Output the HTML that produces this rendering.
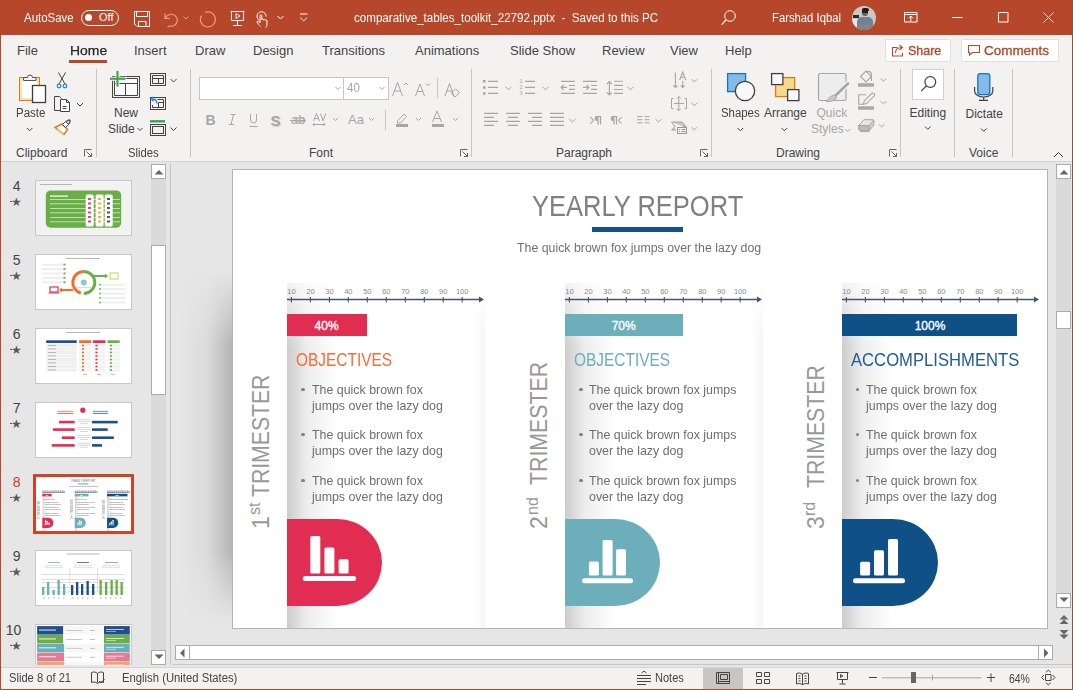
<!DOCTYPE html>
<html><head><meta charset="utf-8">
<style>
*{margin:0;padding:0;box-sizing:border-box}
html,body{width:1073px;height:690px;overflow:hidden;background:#E6E6E6;font-family:"Liberation Sans",sans-serif;position:relative}
.a{position:absolute}
.t{position:absolute;white-space:nowrap;line-height:1}
svg{position:absolute;overflow:visible}
#title{left:0;top:0;width:1073px;height:35px;background:#B7472A;color:#fff}
#rib{left:0;top:35px;width:1073px;height:127px;background:#F3F2F1;border-bottom:1px solid #D6D4D2}
.tab{font-size:13px;color:#444;top:44px}
.lbl{font-size:12px;color:#444;top:146.5px}
.blbl{font-size:12px;color:#444}
.sep{position:absolute;width:1px;background:#C8C6C4}
.ico{stroke:#444;fill:none;stroke-width:1}
.dis{color:#A6A6A6}
.sbtn{background:#fff;border:1px solid #ABABAB}
#mini svg path{stroke-width:7}
#mini .t{-webkit-text-stroke:1.2px #bbb}
#status{left:0;top:667px;width:1073px;height:23px;background:#F3F2F1;border-top:1px solid #D6D4D2}
</style></head><body>

<!-- TITLE BAR -->
<div id="title" class="a">
  <div class="t" style="left:24px;top:12px;font-size:12px;transform:scaleX(.955);transform-origin:0 0">AutoSave</div>
  <div class="a" style="left:81px;top:10px;width:38px;height:16px;border:1px solid #fff;border-radius:8px"></div>
  <div class="a" style="left:85px;top:14px;width:7px;height:7px;border-radius:50%;background:#fff"></div>
  <div class="t" style="left:99px;top:12px;font-size:11px">Off</div>
  <svg width="1073" height="35" style="left:0;top:0" fill="none" stroke="#fff" stroke-width="1">
    <!-- save -->
    <path d="M134.5 11.5h15v15h-12.5l-2.5-2.5z M136.5 11.5v5h11v-5 M138.5 26.5v-5h7.5v5"/>
    <!-- undo (disabled) -->
    <g stroke="#E39C86" stroke-width="1.2">
      <path d="M165 13.5v5h5 M165.5 18.5a6 6 0 1 1 4 7.5l-2 1"/>
      <path d="M183.5 16.5l2.5 2.5l2.5-2.5" stroke-width="1"/>
      <path d="M205 12.5a7.5 7.5 0 1 1 -3.5 3"/>
    </g>
    <!-- present -->
    <path d="M230.5 11.5h14 M231.5 11.5v9h12v-9 M237.5 20.5v5 M233 25.5h9"/>
    <path d="M236 13.5v5l4-2.5z" stroke-width=".9"/>
    <!-- touch -->
    <path d="M259 20a4.5 4.5 0 1 1 7-3.5 M260.5 26.5c-1.5-1.5-3-3-3.5-4.5c0-1 1-1.2 1.8-.5l1.2 1.2v-7c0-1.2 1.8-1.2 1.8 0v4c0-1 1.8-1 1.8 0v.5c0-1 1.8-1 1.8 0v.5c0-1 1.6-1 1.6 0v3.5c0 1.5-.5 2.5-1.5 3.5"/>
    <path d="M277.5 16l3 3l3-3"/>
    <!-- customize -->
    <path d="M300 14h7.5 M300.3 17.8l3.45 3l3.45-3"/>
    <!-- search -->
    <circle cx="730" cy="16" r="5.3"/>
    <path d="M726.2 19.8l-4.5 4.8" stroke-width="1.3"/>
    <!-- ribbon display options -->
    <path d="M904.5 12.5h12.5v9.5h-12.5z M904.5 14.5h12.5 M910.8 21.5v-5.5 M908.5 18.3l2.3-2.3l2.3 2.3"/>
    <!-- minimize -->
    <path d="M952 17.5h10.5"/>
    <path d="M998.5 12.5h9.5v9.5h-9.5z"/>
    <path d="M1043.5 12.5l10 10 M1053.5 12.5l-10 10"/>
  </svg>
  <div class="t" style="left:354px;top:12px;font-size:12px;transform:scaleX(.966);transform-origin:0 0">comparative_tables_toolkit_22792.pptx&nbsp; - &nbsp;Saved to this PC</div>
  <div class="t" style="left:772px;top:12px;font-size:12px;transform:scaleX(.94);transform-origin:0 0">Farshad Iqbal</div>
  <!-- avatar -->
  <div class="a" style="left:852px;top:6px;width:24px;height:24px;border-radius:50%;background:#C9C8C2;overflow:hidden">
    <div class="a" style="left:0;top:13px;width:7px;height:11px;background:#E4E4E4"></div>
    <div class="a" style="left:1px;top:9px;width:6px;height:3px;background:#2a2a2a"></div>
    <div class="a" style="left:10px;top:2px;width:6px;height:8px;border-radius:40%;background:#7a6055"></div>
    <div class="a" style="left:9.5px;top:1.5px;width:7px;height:3px;border-radius:3px 3px 1px 1px;background:#1e1a18"></div>
    <div class="a" style="left:10px;top:5px;width:6px;height:1.5px;background:#222"></div>
    <div class="a" style="left:5px;top:11px;width:16px;height:14px;border-radius:5px 5px 0 0;background:#6F829A"></div>
    <div class="a" style="left:7px;top:19px;width:12px;height:3px;background:#9a8070"></div>
  </div>
</div>

<!-- RIBBON -->
<div id="rib" class="a"></div>
<!--RIBBON_START-->
<!-- TABS -->
<div class="t tab" style="left:17px">File</div>
<div class="t tab" style="left:69.5px;color:#262626;font-size:13.4px;top:43.6px;-webkit-text-stroke:.25px #262626;transform:scaleX(1.04);transform-origin:0 0">Home</div>
<div class="a" style="left:69px;top:60px;width:38px;height:3px;background:#B7472A"></div>
<div class="t tab" style="left:134px">Insert</div>
<div class="t tab" style="left:195px">Draw</div>
<div class="t tab" style="left:253px">Design</div>
<div class="t tab" style="left:322px">Transitions</div>
<div class="t tab" style="left:415px">Animations</div>
<div class="t tab" style="left:510px">Slide Show</div>
<div class="t tab" style="left:602px">Review</div>
<div class="t tab" style="left:670px">View</div>
<div class="t tab" style="left:725px">Help</div>
<div class="a" style="left:885px;top:39px;width:66px;height:23px;background:#fff;border:1px solid #E1DFDD;border-radius:2px"></div>
<div class="t" style="left:907.5px;top:44px;font-size:13px;color:#B7472A;-webkit-text-stroke:.35px #B7472A;transform:scaleX(.96);transform-origin:0 0">Share</div>
<div class="a" style="left:961px;top:39px;width:98px;height:23px;background:#fff;border:1px solid #E1DFDD;border-radius:2px"></div>
<div class="t" style="left:984px;top:44px;font-size:13px;color:#B7472A;-webkit-text-stroke:.35px #B7472A;transform:scaleX(1.035);transform-origin:0 0">Comments</div>
<svg width="1073" height="70" style="left:0;top:0" fill="none" stroke="#B7472A" stroke-width="1.1"><path d="M897.5 47.5h-5v8.5h10v-3 M895.5 53c0-3.5 2.5-5.5 6.5-5.5 M899.5 45l3 2.5l-3 2.5"/><path d="M968.5 45.5h11v7h-7l-3 2.5v-2.5h-1z"/></svg>

<!-- GROUP LABELS -->
<div class="t lbl" style="left:16px">Clipboard</div>
<div class="t lbl" style="left:128px;transform:scaleX(.94);transform-origin:0 0">Slides</div>
<div class="t lbl" style="left:309px">Font</div>
<div class="t lbl" style="left:556px">Paragraph</div>
<div class="t lbl" style="left:776px">Drawing</div>
<div class="t lbl" style="left:969px">Voice</div>

<!-- BIG BUTTON LABELS -->
<div class="t blbl" style="left:15.5px;top:107px;transform:scaleX(.96);transform-origin:0 0">Paste</div>
<div class="t blbl" style="left:114px;top:107px">New</div>
<div class="t blbl" style="left:108px;top:123px">Slide</div>
<div class="t blbl" style="left:721px;top:107px;transform:scaleX(.95);transform-origin:0 0">Shapes</div>
<div class="t blbl" style="left:764px;top:107px">Arrange</div>
<div class="t blbl" style="left:816.5px;top:107px;color:#A6A6A6">Quick</div>
<div class="t blbl" style="left:811px;top:123px;color:#A6A6A6">Styles</div>
<div class="t blbl" style="left:909.5px;top:106.5px">Editing</div>
<div class="t blbl" style="left:965.5px;top:107.5px">Dictate</div>

<!-- boxes -->
<div class="a" style="left:199px;top:77px;width:145px;height:23px;background:#fff;border:1px solid #C8C6C4"></div>
<div class="a" style="left:343px;top:77px;width:46px;height:23px;background:#fff;border:1px solid #C8C6C4"></div>
<div class="a" style="left:912px;top:69px;width:32px;height:31px;background:#fff;border:1px solid #D2D0CE"></div>
<div class="t" style="left:346.5px;top:82px;font-size:12.5px;color:#A6A6A6;transform:scaleX(.92);transform-origin:0 0">40</div>

<!-- separators -->
<div class="sep" style="left:96px;top:69px;height:88px"></div>
<div class="sep" style="left:190px;top:69px;height:88px"></div>
<div class="sep" style="left:471px;top:69px;height:88px"></div>
<div class="sep" style="left:711px;top:69px;height:88px"></div>
<div class="sep" style="left:900px;top:69px;height:88px"></div>
<div class="sep" style="left:954px;top:69px;height:88px"></div>
<div class="sep" style="left:1012px;top:69px;height:88px"></div>
<div class="sep" style="left:437px;top:78px;height:20px"></div>
<div class="sep" style="left:385px;top:110px;height:20px"></div>

<svg width="1073" height="170" style="left:0;top:0" fill="none" stroke-width="1">
 <!-- chevrons dark -->
 <g stroke="#444">
  <path d="M26.8 128l2.8 2.8l2.8-2.8 M77 103l3 3l3-3 M137.5 128l2.5 2.5l2.5-2.5 M170.5 79l3 3l3-3 M170.5 127.5l3 3l3-3 M737.5 128l2.8 2.8l2.8-2.8 M781.5 128l2.8 2.8l2.8-2.8 M925 126.5l2.8 2.8l2.8-2.8 M981 128.5l2.8 2.8l2.8-2.8"/>
  <path d="M1054 157l4.5-4.5l4.5 4.5"/>
 </g>
 <!-- launchers -->
 <g stroke="#666">
  <path d="M84.5 156.5v-7h7 M86.5 151.5l5 5 M88 156.5h3.5v-3.5"/>
  <path d="M460.5 156.5v-7h7 M462.5 151.5l5 5 M464 156.5h3.5v-3.5"/>
  <path d="M700.5 156.5v-7h7 M702.5 151.5l5 5 M704 156.5h3.5v-3.5"/>
  <path d="M889.5 156.5v-7h7 M891.5 151.5l5 5 M893 156.5h3.5v-3.5"/>
 </g>
 <!-- PASTE -->
 <rect x="19.5" y="77.5" width="20" height="23" fill="#fff" stroke="#E07B13"/>
 <rect x="21" y="79" width="17" height="20" stroke="#F7D79A" stroke-width="1.5"/>
 <path d="M23.5 80.5v-3h4a2.5 2.5 0 0 1 5 0h3.5v3z" fill="#F3F3F3" stroke="#555"/>
 <rect x="32.5" y="85.5" width="13" height="17" fill="#fff" stroke="#3b3b3b" stroke-width="1.3"/>
 <!-- scissors -->
 <path d="M58.5 72.5l6.5 11.5 M65.5 72.5l-6.5 11.5" stroke="#444"/>
 <circle cx="59" cy="86" r="1.8" stroke="#2E86D6" stroke-width="1.3"/>
 <circle cx="65" cy="86" r="1.8" stroke="#2E86D6" stroke-width="1.3"/>
 <!-- copy -->
 <path d="M61.5 110.5h-7v-14h5l2 2" stroke="#444"/>
 <path d="M60.5 99.5h6l3 3v9h-9z M66.5 99.5v3h3 M62.5 106.5h4 M62.5 108.5h4" stroke="#444" fill="#fff"/>
 <!-- format painter -->
 <path d="M55 127.5l7-3.5l5.5 5.5l-3.5 5z" fill="#fff" stroke="#E07B13" stroke-width="1.5"/>
 <path d="M57 130l4 1.5l2 3" stroke="#F7C46A" stroke-width="1.5"/>
 <path d="M62.5 124.5l3-3l3 3l-3 3z" fill="#fff" stroke="#444"/>
 <path d="M66 121.5l3-1.5 q1.5 0 1 1.5l-1.5 3" stroke="#444" stroke-width="1.3"/>
 <!-- NEW SLIDE -->
 <rect x="112.5" y="76.5" width="27" height="21" stroke="#444"/>
 <path d="M114.5 95.5v-17h23v17z M125.5 83.5v12 M114.5 83.5h23" stroke="#444" fill="#FAFAFA"/>
 <path d="M109 78.7h17.5 M117.5 70v17.5" stroke="#F3F2F1" stroke-width="4"/><path d="M110 78.7h15.5 M117.5 71v15.5" stroke="#3A9D48" stroke-width="2"/>
 <!-- layout -->
 <rect x="150.5" y="73.5" width="15" height="12" stroke="#444"/>
 <path d="M152.5 75.5h11v8h-11z M152.5 78.5h11 M158.5 78.5v5" stroke="#444"/>
 <!-- reset -->
 <rect x="150.5" y="97.5" width="15" height="12" stroke="#444"/>
 <path d="M157.5 99.5h6v8h-11v-2.5 M158.5 102.5h5 M158.5 102.5v5" stroke="#444"/>
 <path d="M157 103.5c0-3-1.5-4.5-5-4.5 M153.5 96.8l-2 2.2l2 2.2" stroke="#2E86D6" stroke-width="1.3"/>
 <!-- section -->
 <path d="M150 121.3h15" stroke="#3A9D48" stroke-width="2.3"/>
 <rect x="150.5" y="124.5" width="15" height="11" stroke="#444"/>
 <rect x="152.5" y="126.5" width="11" height="7" stroke="#444"/>

 <!-- FONT GROUP (disabled) -->
 <g stroke="#A6A6A6" fill="none">
  <path d="M335.5 87l2.5 2.5l2.5-2.5 M379.5 87l2.5 2.5l2.5-2.5"/>
  <path d="M392.5 96l5-13.5l5 13.5 M394.5 91h6 M404 85l2-2l2 2"/>
  <path d="M415.5 96l4.5-12l4.5 12 M417.2 91.5h5.6 M426 83.5l2 2l2-2"/>
  <path d="M445 96l4.5-12.5l4.5 12.5 M446.5 91h6 M451.5 93l4-4l4 3l-3.5 4.5h-2z"/>
  <!-- row 2 -->
  <path d="M233.5 114.5l-2.5 10 M230.5 114.5h5 M229 124.5h5"/>
  <path d="M250.5 114v6a3 3 0 0 0 6 0v-6 M249.5 126.5h8"/>
  <path d="M295 118h7 a2 2 0 0 1 0 4h-7z" stroke-width=".9"/>
  <path d="M290 120.5h16"/>
  <path d="M313.5 121l3-7.5l3 7.5 M314.7 118.5h3.6 M320.5 113.5l2.6 7.5l2.6-7.5 M313 124.5h12 M314.5 123l-1.5 1.5l1.5 1.5 M323.5 123l1.5 1.5l-1.5 1.5"/>
  <path d="M333 118l2.5 2.5l2.5-2.5 M369 118l2.5 2.5l2.5-2.5 M416 118l2.5 2.5l2.5-2.5 M453 118l2.5 2.5l2.5-2.5"/>
  <path d="M398 120.5l6-6.5l2.5 2.5l-6 6.5h-3v-2.5" />
  <path d="M432.5 122l4.5-11l4.5 11 M434 118.5h6"/>
 </g>
 <path d="M396 125.5h12" stroke="#A6A6A6" stroke-width="3"/>
 <path d="M432 125.5h12" stroke="#A6A6A6" stroke-width="3"/>
</svg>
<div class="t" style="left:205.5px;top:113px;font-size:14px;font-weight:bold;color:#A6A6A6">B</div>
<div class="t" style="left:270.5px;top:112.5px;font-size:15px;font-weight:bold;color:#A6A6A6;text-shadow:1px 1px 1px #ccc">S</div>
<div class="t" style="left:291px;top:112.5px;font-size:13px;color:#A6A6A6">ab</div>
<div class="t" style="left:348px;top:113px;font-size:13px;color:#A6A6A6">Aa</div>
<div class="t" style="left:519.5px;top:78px;font-size:5.5px;line-height:6px;color:#A6A6A6;white-space:pre">1
2
3</div>

<svg width="1073" height="170" style="left:0;top:0" fill="none" stroke-width="1">
 <g stroke="#A6A6A6">
  <!-- bullets -->
  <path d="M483 81.3h2.5 M483 87.4h2.5 M483 93.4h2.5" stroke-width="2.5"/>
  <path d="M488 81.3h10 M488 87.4h10 M488 93.4h10" stroke-width="1.2"/>
  <path d="M505.5 86.8l3 3l3-3 M542.5 86.8l3 3l3-3 M627.5 86.8l3 3l3-3 M569.3 119l3.2 3l3.2-3 M655.5 119.2l3 2.8l3-2.8 M691.3 79.3l3 2.5l3-2.5 M691.3 103l3 2.6l3-2.6 M691.3 127.1l3 2.8l3-2.8"/>
  <path d="M525 81.3h10 M525 87.4h10 M525 93.4h10" stroke-width="1.2"/>
  <!-- indent -->
  <path d="M561 81.3h14 M569 85.5h6 M569 89.3h6 M561 93.4h14 M561.5 87.4h5.5 M563.5 85l-2.3 2.4l2.3 2.4" stroke-width="1.2"/>
  <path d="M583 81.3h14 M591 85.5h6 M591 89.3h6 M583 93.4h14 M583 87.4h5.5 M586.5 85l2.3 2.4l-2.3 2.4" stroke-width="1.2"/>
  <!-- line spacing -->
  <path d="M609.4 82v12.5 M607 84l2.4-2.5l2.4 2.5 M607 92.5l2.4 2.5l2.4-2.5 M614 81.3h9 M614 85.4h9 M614 89.5h9 M614 93.4h9" stroke-width="1.1"/>
  <!-- align -->
  <path d="M484 113.4h14 M484 117.4h10 M484 121.4h14 M484 125.4h10" stroke-width="1.2"/>
  <path d="M506 113.4h14 M508 117.4h10 M506 121.4h14 M508 125.4h10" stroke-width="1.2"/>
  <path d="M528 113.4h14 M532 117.4h10 M528 121.4h14 M532 125.4h10" stroke-width="1.2"/>
  <path d="M550 113.4h14 M550 117.4h14 M550 121.4h14 M550 125.4h14" stroke-width="1.2"/>
  <!-- ltr rtl -->
  <path d="M590.5 117l3 3.3l-3 3.3 M621.5 117l-3 3.3l3 3.3" stroke-width="1.1"/>
  <!-- columns -->
  <path d="M637 116.6h5.5 M637 119.7h5.5 M637 122.8h5.5 M644.5 116.6h5 M644.5 119.7h5 M644.5 122.8h5" stroke-width="1"/>
  <!-- text direction -->
  <path d="M675.4 72.5v15 M673.3 85.3l2.1 2.2l2.1-2.2 M679.7 80l3-8l3 8 M680.8 77.3h3.8 M682.7 81v7 M680.8 85.5l1.9 2l1.9-2" stroke-width="1.1"/>
  <!-- align text -->
  <path d="M673.5 98.5h-2v10h2 M684.5 98.5h2v10h-2 M674 103.5h10 M678.8 96.5v14 M676.8 98.5l2-2l2 2 M676.8 108.7l2 2l2-2"/>
  <!-- smartart -->
  <path d="M671.5 122h10.5l4 4.5h-3 M671.5 122l3.5 4.5l-3.5 3.5h4.5" fill="#C9C6C3" stroke="#A6A6A6"/>
  <rect x="677.5" y="127.5" width="9" height="6" fill="#F3F2F1" stroke="#999"/>
  <path d="M679 129.5h1 M681.5 129.5h4 M679 131.5h1 M681.5 131.5h4" stroke="#999"/>
 </g>
 <path d="M598 116.5v8 M600.5 116.5v8 M596 116.5h5.3" stroke="#A6A6A6" stroke-width="1.2"/>
 <path d="M597.5 116.6a1.8 1.8 0 0 0 0 3.6" fill="#A6A6A6" stroke="#A6A6A6" stroke-width="1.8"/>
 <path d="M614 116.5v8 M616.5 116.5v8 M612 116.5h5.3" stroke="#A6A6A6" stroke-width="1.2"/>
 <path d="M613.5 116.6a1.8 1.8 0 0 0 0 3.6" fill="#A6A6A6" stroke="#A6A6A6" stroke-width="1.8"/>
 <!-- DRAWING -->
 <rect x="727.6" y="73.6" width="18" height="18" fill="#82BBEA" stroke="#1671C7" stroke-width="1.3"/>
 <circle cx="745" cy="91" r="9.7" fill="#F8F8F8" stroke="#404040" stroke-width="1.3"/>
 <rect x="775.6" y="77.6" width="19" height="19" fill="#F7D98B" stroke="#E07B13" stroke-width="1.3"/>
 <rect x="771.6" y="73.6" width="11.3" height="11" fill="#F8F8F8" stroke="#404040" stroke-width="1.3"/>
 <rect x="787.6" y="89.6" width="11.3" height="11" fill="#F8F8F8" stroke="#404040" stroke-width="1.3"/>
 <rect x="818.5" y="73.5" width="27.5" height="27" rx="1.5" fill="#EDEDED" stroke="#A6A6A6" stroke-width="1.2"/>
 <path d="M848.5 83l-14 13.5" stroke="#F3F2F1" stroke-width="5.5"/>
 <path d="M848 83.5l-13 12.5" stroke="#A6A6A6" stroke-width="2.6" stroke-linecap="round"/>
 <path d="M835.8 95.2c-3.5-.5-6.5 1.5-9.5 6.3c4 .5 7.5-.5 10.5-3.6z" fill="#C8C8C8" stroke="#A6A6A6" stroke-width=".9"/>
 <path d="M845 129l2.6 2.6l2.6-2.6" stroke="#A6A6A6"/>
 <g stroke="#A6A6A6">
  <path d="M880.6 78.5l2.9 2.6l2.9-2.6 M880.6 101.3l2.9 2.6l2.9-2.6 M878.7 124.2l2.9 2.6l2.9-2.6"/>
  <path d="M860.5 76.5l5.5-5.5l5.5 5.5l-5.5 5.5z M867 72c2-1.5 4.5 0 4.5 2.5v6.5" stroke-width="1.1"/>
  <path d="M866 94.8h-7.3v9.5h4.5" stroke-width="1.1"/>
  <path d="M863.5 104.3l.6-3.2l7.5-7.5a1.6 1.6 0 0 1 2.5 2.5l-7.5 7.5z" stroke-width="1.1"/>
 </g>
 <path d="M858 85h16 M858 108h16" stroke="#ADA9A6" stroke-width="3.6"/>
 <path d="M858.8 125.5l5-5.8h9.5l.6 2.2l-5 6.2v3.5h-8.3l-1.8-2z" fill="#E6E6E6" stroke="#A6A6A6" stroke-width="1"/>
 <path d="M858.8 125.5h10.2v5.6h-8.3l-1.9-2z" fill="#BDBAB7" stroke="#A6A6A6" stroke-width="1"/>
 <path d="M869 125.5l4.8-5.5v5l-4.8 6z" fill="#D0CDCA" stroke="#A6A6A6" stroke-width="1"/>
 <!-- editing -->
 <circle cx="930.3" cy="82" r="5.4" stroke="#404040" stroke-width="1.2"/>
 <path d="M926.4 85.9l-5.2 5.2" stroke="#404040" stroke-width="1.3"/>
 <!-- mic -->
 <rect x="977.8" y="73.6" width="12" height="21" rx="2.5" fill="#82BBEA" stroke="#1671C7" stroke-width="1.3"/>
 <path d="M974.6 87v4a9.1 6 0 0 0 18.2 0v-4 M983.7 97v3.3 M979 100.3h9" stroke="#404040" stroke-width="1.2"/>
</svg>

<!--RIBBON_END-->

<!--BODY_START-->
<!--THUMBS_START-->
<div class="t" style="left:12.8px;top:178.5px;font-size:14px;color:#444">4</div>
<div class="t" style="left:10.5px;top:196px;font-size:12px;color:#595959">&#9733;</div>
<div class="a" style="left:10px;top:201px;width:2px;height:1px;background:#595959"></div>
<div class="t" style="left:12.8px;top:252.5px;font-size:14px;color:#444">5</div>
<div class="t" style="left:10.5px;top:270px;font-size:12px;color:#595959">&#9733;</div>
<div class="a" style="left:10px;top:275px;width:2px;height:1px;background:#595959"></div>
<div class="t" style="left:12.8px;top:326.5px;font-size:14px;color:#444">6</div>
<div class="t" style="left:10.5px;top:344px;font-size:12px;color:#595959">&#9733;</div>
<div class="a" style="left:10px;top:349px;width:2px;height:1px;background:#595959"></div>
<div class="t" style="left:12.8px;top:400.5px;font-size:14px;color:#444">7</div>
<div class="t" style="left:10.5px;top:418px;font-size:12px;color:#595959">&#9733;</div>
<div class="a" style="left:10px;top:423px;width:2px;height:1px;background:#595959"></div>
<div class="t" style="left:12.8px;top:474.5px;font-size:14px;color:#C43E1C">8</div>
<div class="t" style="left:10.5px;top:492px;font-size:12px;color:#595959">&#9733;</div>
<div class="a" style="left:10px;top:497px;width:2px;height:1px;background:#595959"></div>
<div class="t" style="left:12.8px;top:548.5px;font-size:14px;color:#444">9</div>
<div class="t" style="left:10.5px;top:566px;font-size:12px;color:#595959">&#9733;</div>
<div class="a" style="left:10px;top:571px;width:2px;height:1px;background:#595959"></div>
<div class="t" style="left:5.8px;top:622.5px;font-size:14px;color:#444">10</div>
<div class="t" style="left:10.5px;top:640px;font-size:12px;color:#595959">&#9733;</div>
<div class="a" style="left:10px;top:645px;width:2px;height:1px;background:#595959"></div>
<div class="a" style="left:0;top:163px;width:170px;height:502px;overflow:hidden">
<div class="a" style="left:0;top:-163px;width:170px;height:690px">
<div class="a" style="left:35px;top:180px;width:97px;height:56px;border:1px solid #C8C8C8;background:#F2F2F2"></div>
<div class="a" style="left:35px;top:254px;width:97px;height:56px;border:1px solid #C8C8C8;background:#fff"></div>
<div class="a" style="left:35px;top:328px;width:97px;height:56px;border:1px solid #C8C8C8;background:#fff"></div>
<div class="a" style="left:35px;top:402px;width:97px;height:56px;border:1px solid #C8C8C8;background:#fff"></div>
<div class="a" style="left:33px;top:474px;width:101px;height:60px;border:3px solid #D04423;background:#fff"></div>
<div class="a" style="left:35px;top:550px;width:97px;height:56px;border:1px solid #C8C8C8;background:#fff"></div>
<div class="a" style="left:35px;top:624px;width:97px;height:56px;border:1px solid #C8C8C8;background:#fff"></div>
<svg width="170" height="690" style="left:0;top:0"><rect x="40" y="184" width="32" height="1" fill="#b5b5b5"/><rect x="45.8" y="190.4" width="75.4" height="37.4" rx="5" fill="#6AAF45"/><rect x="50" y="199" width="70" height="0.7" fill="#E9F3E2"/><rect x="50" y="203.5" width="70" height="0.7" fill="#E9F3E2"/><rect x="50" y="208" width="70" height="0.7" fill="#E9F3E2"/><rect x="50" y="212.5" width="70" height="0.7" fill="#E9F3E2"/><rect x="50" y="217" width="70" height="0.7" fill="#E9F3E2"/><rect x="50" y="221.5" width="70" height="0.7" fill="#E9F3E2"/><rect x="50" y="195.5" width="18" height="1.2" fill="#fff"/><rect x="85.7" y="194.6" width="8" height="32" rx="1.5" fill="#fff"/><rect x="95.6" y="194.6" width="8" height="32" rx="1.5" fill="#fff"/><rect x="104.7" y="194.6" width="8" height="32" rx="1.5" fill="#fff"/><rect x="88" y="198" width="3" height="2" fill="#E04A6A"/><rect x="98" y="198" width="3" height="2" fill="#F0B030"/><rect x="107" y="198" width="3" height="2" fill="#555"/><rect x="88" y="202.5" width="3" height="2" fill="#E04A6A"/><rect x="98" y="202.5" width="3" height="2" fill="#F0B030"/><rect x="107" y="202.5" width="3" height="2" fill="#555"/><rect x="88" y="207" width="3" height="2" fill="#E04A6A"/><rect x="98" y="207" width="3" height="2" fill="#F0B030"/><rect x="107" y="207" width="3" height="2" fill="#555"/><rect x="88" y="211.5" width="3" height="2" fill="#E04A6A"/><rect x="98" y="211.5" width="3" height="2" fill="#F0B030"/><rect x="107" y="211.5" width="3" height="2" fill="#555"/><rect x="88" y="216" width="3" height="2" fill="#E04A6A"/><rect x="98" y="216" width="3" height="2" fill="#F0B030"/><rect x="107" y="216" width="3" height="2" fill="#555"/><rect x="88" y="220.5" width="3" height="2" fill="#E04A6A"/><rect x="98" y="220.5" width="3" height="2" fill="#F0B030"/><rect x="107" y="220.5" width="3" height="2" fill="#555"/><rect x="66" y="258" width="34" height="1" fill="#b5b5b5"/><rect x="41.8" y="263.8" width="22" height="1.8" fill="#EDEDED"/><rect x="63.5" y="263.6" width="2" height="2" fill="#7CB14A"/><rect x="41.8" y="268.2" width="22" height="1.8" fill="#EDEDED"/><rect x="63.5" y="268" width="2" height="2" fill="#7CB14A"/><rect x="41.8" y="272.59999999999997" width="22" height="1.8" fill="#EDEDED"/><rect x="63.5" y="272.4" width="2" height="2" fill="#7CB14A"/><rect x="41.8" y="277.0" width="22" height="1.8" fill="#EDEDED"/><rect x="63.5" y="276.8" width="2" height="2" fill="#7CB14A"/><rect x="41.8" y="281.4" width="22" height="1.8" fill="#EDEDED"/><rect x="63.5" y="281.2" width="2" height="2" fill="#7CB14A"/><rect x="101" y="283.9" width="24" height="1.8" fill="#EDEDED"/><circle cx="100" cy="284.7" r="1" fill="#7CB14A"/><rect x="101" y="288.2" width="24" height="1.8" fill="#EDEDED"/><circle cx="100" cy="289" r="1" fill="#7CB14A"/><rect x="101" y="292.7" width="24" height="1.8" fill="#EDEDED"/><circle cx="100" cy="293.5" r="1" fill="#7CB14A"/><rect x="101" y="297.2" width="24" height="1.8" fill="#EDEDED"/><circle cx="100" cy="298" r="1" fill="#7CB14A"/><rect x="101" y="301.59999999999997" width="24" height="1.8" fill="#EDEDED"/><circle cx="100" cy="302.4" r="1" fill="#7CB14A"/><path d="M83.8 271.5a11 11 0 0 0 -3 21.6" stroke="#F26C22" stroke-width="3" fill="none"/><path d="M83.8 271.5a11 11 0 0 1 0 22" stroke="#6AAF45" stroke-width="3" fill="none"/><path d="M93 276h12" stroke="#6AAF45" stroke-width="2"/><path d="M105 273.5l3 2.5l-3 2.5z" fill="#6AAF45"/><rect x="110" y="273" width="8" height="6" fill="none" stroke="#C5DE6A" stroke-width="1.2"/><path d="M73 290h-11" stroke="#F26C22" stroke-width="2"/><path d="M62 287.5l-3 2.5l3 2.5z" fill="#F26C22"/><rect x="50" y="287" width="8" height="5" fill="none" stroke="#E02F52" stroke-width="1.2"/><path d="M48.5 293h11" stroke="#E02F52"/><circle cx="83.8" cy="282.5" r="3" fill="#8ACCC8"/><rect x="77" y="287" width="14" height="0.7" fill="#cfcfcf"/><rect x="66" y="332" width="34" height="1" fill="#b5b5b5"/><rect x="46.2" y="340.3" width="30.5" height="2.7" fill="#1F4E8C"/><rect x="79.1" y="340.3" width="12.2" height="2.7" fill="#F26C22"/><rect x="92.9" y="340.3" width="12.6" height="2.7" fill="#E02F52"/><rect x="107.5" y="340.3" width="12.2" height="2.7" fill="#6AAF45"/><rect x="46.2" y="344.0" width="30.5" height="3" fill="#EFEFEF"/><rect x="79.1" y="344.0" width="12.2" height="3" fill="#F3F3F3"/><rect x="92.9" y="344.0" width="12.6" height="3" fill="#F3F3F3"/><rect x="107.5" y="344.0" width="12.2" height="3" fill="#F3F3F3"/><rect x="48" y="345.0" width="8" height="0.8" fill="#aaa"/><rect x="82" y="344.7" width="2" height="1.6" fill="#F26C22"/><rect x="95.5" y="344.7" width="2" height="1.6" fill="#E02F52"/><rect x="110" y="344.7" width="2" height="1.6" fill="#6AAF45"/><rect x="46.2" y="347.5" width="30.5" height="3" fill="#EFEFEF"/><rect x="79.1" y="347.5" width="12.2" height="3" fill="#F3F3F3"/><rect x="92.9" y="347.5" width="12.6" height="3" fill="#F3F3F3"/><rect x="107.5" y="347.5" width="12.2" height="3" fill="#F3F3F3"/><rect x="48" y="348.5" width="8" height="0.8" fill="#aaa"/><rect x="82" y="348.2" width="2" height="1.6" fill="#F26C22"/><rect x="95.5" y="348.2" width="2" height="1.6" fill="#E02F52"/><rect x="110" y="348.2" width="2" height="1.6" fill="#6AAF45"/><rect x="46.2" y="351.0" width="30.5" height="3" fill="#EFEFEF"/><rect x="79.1" y="351.0" width="12.2" height="3" fill="#F3F3F3"/><rect x="92.9" y="351.0" width="12.6" height="3" fill="#F3F3F3"/><rect x="107.5" y="351.0" width="12.2" height="3" fill="#F3F3F3"/><rect x="48" y="352.0" width="8" height="0.8" fill="#aaa"/><rect x="82" y="351.7" width="2" height="1.6" fill="#F26C22"/><rect x="95.5" y="351.7" width="2" height="1.6" fill="#E02F52"/><rect x="110" y="351.7" width="2" height="1.6" fill="#6AAF45"/><rect x="46.2" y="354.5" width="30.5" height="3" fill="#EFEFEF"/><rect x="79.1" y="354.5" width="12.2" height="3" fill="#F3F3F3"/><rect x="92.9" y="354.5" width="12.6" height="3" fill="#F3F3F3"/><rect x="107.5" y="354.5" width="12.2" height="3" fill="#F3F3F3"/><rect x="48" y="355.5" width="8" height="0.8" fill="#aaa"/><rect x="82" y="355.2" width="2" height="1.6" fill="#F26C22"/><rect x="95.5" y="355.2" width="2" height="1.6" fill="#E02F52"/><rect x="110" y="355.2" width="2" height="1.6" fill="#6AAF45"/><rect x="46.2" y="358.0" width="30.5" height="3" fill="#EFEFEF"/><rect x="79.1" y="358.0" width="12.2" height="3" fill="#F3F3F3"/><rect x="92.9" y="358.0" width="12.6" height="3" fill="#F3F3F3"/><rect x="107.5" y="358.0" width="12.2" height="3" fill="#F3F3F3"/><rect x="48" y="359.0" width="8" height="0.8" fill="#aaa"/><rect x="82" y="358.7" width="2" height="1.6" fill="#F26C22"/><rect x="95.5" y="358.7" width="2" height="1.6" fill="#E02F52"/><rect x="110" y="358.7" width="2" height="1.6" fill="#6AAF45"/><rect x="46.2" y="361.5" width="30.5" height="3" fill="#EFEFEF"/><rect x="79.1" y="361.5" width="12.2" height="3" fill="#F3F3F3"/><rect x="92.9" y="361.5" width="12.6" height="3" fill="#F3F3F3"/><rect x="107.5" y="361.5" width="12.2" height="3" fill="#F3F3F3"/><rect x="48" y="362.5" width="8" height="0.8" fill="#aaa"/><rect x="82" y="362.2" width="2" height="1.6" fill="#F26C22"/><rect x="95.5" y="362.2" width="2" height="1.6" fill="#E02F52"/><rect x="110" y="362.2" width="2" height="1.6" fill="#6AAF45"/><rect x="46.2" y="365.0" width="30.5" height="3" fill="#EFEFEF"/><rect x="79.1" y="365.0" width="12.2" height="3" fill="#F3F3F3"/><rect x="92.9" y="365.0" width="12.6" height="3" fill="#F3F3F3"/><rect x="107.5" y="365.0" width="12.2" height="3" fill="#F3F3F3"/><rect x="48" y="366.0" width="8" height="0.8" fill="#aaa"/><rect x="82" y="365.7" width="2" height="1.6" fill="#F26C22"/><rect x="95.5" y="365.7" width="2" height="1.6" fill="#E02F52"/><rect x="110" y="365.7" width="2" height="1.6" fill="#6AAF45"/><rect x="46.2" y="368.5" width="30.5" height="3" fill="#EFEFEF"/><rect x="79.1" y="368.5" width="12.2" height="3" fill="#F3F3F3"/><rect x="92.9" y="368.5" width="12.6" height="3" fill="#F3F3F3"/><rect x="107.5" y="368.5" width="12.2" height="3" fill="#F3F3F3"/><rect x="48" y="369.5" width="8" height="0.8" fill="#aaa"/><rect x="82" y="369.2" width="2" height="1.6" fill="#F26C22"/><rect x="95.5" y="369.2" width="2" height="1.6" fill="#E02F52"/><rect x="110" y="369.2" width="2" height="1.6" fill="#6AAF45"/><rect x="83" y="374" width="4" height="0.8" fill="#F5A070"/><rect x="97" y="374" width="4" height="0.8" fill="#EE8899"/><rect x="111" y="374" width="4" height="0.8" fill="#A6D08A"/><rect x="57.4" y="410.8" width="16" height="1.3" fill="#F4A070"/><rect x="57.4" y="413.3" width="16" height="0.7" fill="#E02F52"/><circle cx="82.8" cy="410.2" r="2.6" fill="#E02F52"/><rect x="92.9" y="410.8" width="15" height="1.3" fill="#8E9BC8"/><rect x="92.9" y="413.3" width="15" height="0.7" fill="#1F4E8C"/><rect x="59" y="420.8" width="15.700000000000003" height="2.6" fill="#E02F52"/><rect x="91.9" y="420.8" width="25.799999999999997" height="2.6" fill="#1F4E8C"/><rect x="77.5" y="419.5" width="13" height="0.6" fill="#bbb"/><rect x="77.5" y="421.5" width="13" height="0.6" fill="#bbb"/><rect x="80" y="423.5" width="8" height="0.6" fill="#bbb"/><rect x="53" y="428.3" width="21.700000000000003" height="2.6" fill="#E02F52"/><rect x="91.9" y="428.3" width="15.799999999999997" height="2.6" fill="#1F4E8C"/><rect x="77.5" y="427.0" width="13" height="0.6" fill="#bbb"/><rect x="77.5" y="429.0" width="13" height="0.6" fill="#bbb"/><rect x="80" y="431.0" width="8" height="0.6" fill="#bbb"/><rect x="61.9" y="436.40000000000003" width="12.800000000000004" height="2.6" fill="#E02F52"/><rect x="91.9" y="436.40000000000003" width="21.89999999999999" height="2.6" fill="#1F4E8C"/><rect x="77.5" y="435.1" width="13" height="0.6" fill="#bbb"/><rect x="77.5" y="437.1" width="13" height="0.6" fill="#bbb"/><rect x="80" y="439.1" width="8" height="0.6" fill="#bbb"/><rect x="51.7" y="444.1" width="23.0" height="2.6" fill="#E02F52"/><rect x="91.9" y="444.1" width="10.099999999999994" height="2.6" fill="#1F4E8C"/><rect x="77.5" y="442.8" width="13" height="0.6" fill="#bbb"/><rect x="77.5" y="444.8" width="13" height="0.6" fill="#bbb"/><rect x="80" y="446.8" width="8" height="0.6" fill="#bbb"/><rect x="66.5" y="553.5" width="33" height="1" fill="#b5b5b5"/><rect x="48" y="562" width="12" height="1" fill="#8CC3CC"/><rect x="77" y="562" width="12" height="1" fill="#4F7BB0"/><rect x="105" y="562" width="13" height="1" fill="#8EC46A"/><rect x="45" y="565.5" width="18" height="0.6" fill="#c8c8c8"/><rect x="45" y="567.5" width="18" height="0.6" fill="#c8c8c8"/><rect x="74" y="565.5" width="18" height="0.6" fill="#c8c8c8"/><rect x="74" y="567.5" width="18" height="0.6" fill="#c8c8c8"/><rect x="102" y="565.5" width="18" height="0.6" fill="#c8c8c8"/><rect x="102" y="567.5" width="18" height="0.6" fill="#c8c8c8"/><rect x="41.6" y="574" width="83.2" height="0.6" fill="#C8C8C8"/><rect x="41.6" y="579.2" width="83.2" height="0.6" fill="#C8C8C8"/><rect x="41.6" y="582.4" width="83.2" height="0.6" fill="#C8C8C8"/><rect x="41.6" y="587.3" width="83.2" height="0.6" fill="#C8C8C8"/><rect x="41.6" y="591.7" width="83.2" height="0.6" fill="#C8C8C8"/><rect x="69.6" y="568" width="0.6" height="24" fill="#ccc"/><rect x="97.4" y="568" width="0.6" height="24" fill="#ccc"/><rect x="42" y="587" width="2.3" height="8" fill="#6AAEBB"/><rect x="47" y="582" width="2.3" height="13" fill="#6AAEBB"/><rect x="52.5" y="590" width="2.3" height="5" fill="#6AAEBB"/><rect x="57.5" y="580" width="2.3" height="15" fill="#6AAEBB"/><rect x="63" y="584" width="2.3" height="11" fill="#6AAEBB"/><rect x="71" y="585" width="2.3" height="10" fill="#1F4E8C"/><rect x="76" y="582" width="2.3" height="13" fill="#1F4E8C"/><rect x="81" y="584" width="2.3" height="11" fill="#1F4E8C"/><rect x="86.5" y="581" width="2.3" height="14" fill="#1F4E8C"/><rect x="92" y="584" width="2.3" height="11" fill="#1F4E8C"/><rect x="99.5" y="580" width="2.3" height="15" fill="#6AAF45"/><rect x="105" y="582" width="2.3" height="13" fill="#6AAF45"/><rect x="110.5" y="580" width="2.3" height="15" fill="#6AAF45"/><rect x="115.5" y="580" width="2.3" height="15" fill="#6AAF45"/><rect x="120.5" y="582" width="2.3" height="13" fill="#6AAF45"/><rect x="43" y="597.5" width="1.5" height="1" fill="#aaa"/><rect x="48" y="597.5" width="1.5" height="1" fill="#aaa"/><rect x="53" y="597.5" width="1.5" height="1" fill="#aaa"/><rect x="58" y="597.5" width="1.5" height="1" fill="#aaa"/><rect x="63" y="597.5" width="1.5" height="1" fill="#aaa"/><rect x="72" y="597.5" width="1.5" height="1" fill="#aaa"/><rect x="77" y="597.5" width="1.5" height="1" fill="#aaa"/><rect x="82" y="597.5" width="1.5" height="1" fill="#aaa"/><rect x="87" y="597.5" width="1.5" height="1" fill="#aaa"/><rect x="92" y="597.5" width="1.5" height="1" fill="#aaa"/><rect x="100" y="597.5" width="1.5" height="1" fill="#aaa"/><rect x="105" y="597.5" width="1.5" height="1" fill="#aaa"/><rect x="110" y="597.5" width="1.5" height="1" fill="#aaa"/><rect x="115" y="597.5" width="1.5" height="1" fill="#aaa"/><rect x="120" y="597.5" width="1.5" height="1" fill="#aaa"/><rect x="37" y="626.1" width="93" height="8.5" fill="#F7F7F7"/><rect x="37.1" y="626.1" width="26" height="8.5" fill="#1F4E8C"/><rect x="104" y="626.1" width="25.8" height="8.5" fill="#1F4E8C"/><rect x="39" y="629.6" width="17" height="0.9" fill="#fff"/><rect x="106" y="629.1" width="18" height="0.7" fill="#fff"/><rect x="106" y="631.1" width="10" height="0.5" fill="#fff"/><rect x="66" y="630.1" width="16" height="0.8" fill="#bbb"/><rect x="90" y="630.1" width="5" height="0.9" fill="#bbb"/><rect x="37" y="635.0" width="93" height="8.5" fill="#fff"/><rect x="37.1" y="635.0" width="26" height="8.5" fill="#6AAF45"/><rect x="104" y="635.0" width="25.8" height="8.5" fill="#6AAF45"/><rect x="39" y="638.5" width="17" height="0.9" fill="#fff"/><rect x="106" y="638.0" width="18" height="0.7" fill="#fff"/><rect x="106" y="640.0" width="10" height="0.5" fill="#fff"/><rect x="66" y="639.0" width="16" height="0.8" fill="#bbb"/><rect x="90" y="639.0" width="5" height="0.9" fill="#bbb"/><rect x="37" y="643.9" width="93" height="8.5" fill="#F7F7F7"/><rect x="37.1" y="643.9" width="27" height="8.5" fill="#6AAEBB"/><rect x="104" y="643.9" width="25.8" height="8.5" fill="#6AAEBB"/><rect x="39" y="647.4" width="17" height="0.9" fill="#fff"/><rect x="106" y="646.9" width="18" height="0.7" fill="#fff"/><rect x="106" y="648.9" width="10" height="0.5" fill="#fff"/><rect x="66" y="647.9" width="16" height="0.8" fill="#bbb"/><rect x="90" y="647.9" width="5" height="0.9" fill="#bbb"/><rect x="37" y="652.8000000000001" width="93" height="8.5" fill="#fff"/><rect x="37.1" y="652.8000000000001" width="27" height="8.5" fill="#E57B93"/><rect x="104" y="652.8000000000001" width="25.8" height="8.5" fill="#E57B93"/><rect x="39" y="656.3000000000001" width="17" height="0.9" fill="#fff"/><rect x="106" y="655.8000000000001" width="18" height="0.7" fill="#fff"/><rect x="106" y="657.8000000000001" width="10" height="0.5" fill="#fff"/><rect x="66" y="656.8000000000001" width="16" height="0.8" fill="#bbb"/><rect x="90" y="656.8000000000001" width="5" height="0.9" fill="#bbb"/><rect x="37" y="661.7" width="93" height="8.5" fill="#F7F7F7"/><rect x="37.1" y="661.7" width="27" height="8.5" fill="#F5A070"/><rect x="104" y="661.7" width="25.8" height="8.5" fill="#F5A070"/><rect x="39" y="665.2" width="17" height="0.9" fill="#fff"/><rect x="106" y="664.7" width="18" height="0.7" fill="#fff"/><rect x="106" y="666.7" width="10" height="0.5" fill="#fff"/><rect x="66" y="665.7" width="16" height="0.8" fill="#bbb"/><rect x="90" y="665.7" width="5" height="0.9" fill="#bbb"/></svg>
<div class="a" style="left:36px;top:477px;width:95px;height:54px;overflow:hidden">
<div class="a" style="left:0;top:0;width:814px;height:458px;transform:scale(.1167);transform-origin:0 0"><div class="a" id="mini" style="left:-233px;top:-170px;width:1073px;height:690px"><div class="t" style="left:532px;top:191.3px;font-size:29.6px;color:#808080;transform:scaleX(.862);transform-origin:0 0">YEARLY REPORT</div>
<div class="a" style="left:592px;top:227px;width:91px;height:5px;background:#17508A"></div>
<div class="t" style="left:516.5px;top:241.5px;font-size:12.5px;color:#707070;transform:scaleX(.987);transform-origin:0 0">The quick brown fox jumps over the lazy dog</div>
<div class="a" style="left:287px;top:283px;width:198px;height:360px;background:#fff;box-shadow:1px 2px 5px rgba(0,0,0,.07);-webkit-mask-image:linear-gradient(180deg,rgba(0,0,0,.0) 0,#000 6px)"></div>
<div class="a" style="left:287px;top:283px;width:198px;height:360px;background:#fff"></div>
<div class="a" style="left:473px;top:283px;width:12px;height:345px;background:linear-gradient(90deg,rgba(0,0,0,0),rgba(0,0,0,.035));-webkit-mask-image:linear-gradient(180deg,transparent 0,#000 15%)"></div>
<div class="a" style="left:287px;top:283px;width:50px;height:360px;background:linear-gradient(90deg,rgba(0,0,0,.2),rgba(0,0,0,.07) 40%,rgba(0,0,0,0));-webkit-mask-image:linear-gradient(180deg,rgba(0,0,0,.25) 0,#000 18%,#000 100%)"></div>
<svg width="1073" height="690" style="left:0;top:0" fill="none"><path d="M287 299.5H481" stroke="#44546A" stroke-width="1.3"/><path d="M479 296.5l5 3l-5 3z" fill="#44546A"/><path d="M291.4 297v5.5 M310.4 297v5.5 M329.4 297v5.5 M348.3 297v5.5 M367.3 297v5.5 M386.3 297v5.5 M405.3 297v5.5 M424.3 297v5.5 M443.2 297v5.5 M462.2 297v5.5" stroke="#44546A" stroke-width="1.1"/></svg>
<div class="t" style="left:276.4px;width:30px;text-align:center;top:287.5px;font-size:7.5px;color:#8A8A8A">10</div>
<div class="t" style="left:295.4px;width:30px;text-align:center;top:287.5px;font-size:7.5px;color:#8A8A8A">20</div>
<div class="t" style="left:314.4px;width:30px;text-align:center;top:287.5px;font-size:7.5px;color:#8A8A8A">30</div>
<div class="t" style="left:333.3px;width:30px;text-align:center;top:287.5px;font-size:7.5px;color:#8A8A8A">40</div>
<div class="t" style="left:352.3px;width:30px;text-align:center;top:287.5px;font-size:7.5px;color:#8A8A8A">50</div>
<div class="t" style="left:371.3px;width:30px;text-align:center;top:287.5px;font-size:7.5px;color:#8A8A8A">60</div>
<div class="t" style="left:390.3px;width:30px;text-align:center;top:287.5px;font-size:7.5px;color:#8A8A8A">70</div>
<div class="t" style="left:409.3px;width:30px;text-align:center;top:287.5px;font-size:7.5px;color:#8A8A8A">80</div>
<div class="t" style="left:428.2px;width:30px;text-align:center;top:287.5px;font-size:7.5px;color:#8A8A8A">90</div>
<div class="t" style="left:447.2px;width:30px;text-align:center;top:287.5px;font-size:7.5px;color:#8A8A8A">100</div>
<div class="a" style="left:287px;top:314px;width:80px;height:22px;background:#E12D51"></div>
<div class="t" style="left:296.6px;width:60px;text-align:center;top:319.6px;font-size:12px;color:#fff;-webkit-text-stroke:.35px #fff">40%</div>
<div class="t" style="left:295.6px;top:350.9px;font-size:18.8px;color:#F26E38;transform:scaleX(0.822);transform-origin:0 0">OBJECTIVES</div>
<div class="a" style="left:301.2px;top:387.7px;width:3.5px;height:3.5px;border-radius:50%;background:#808080"></div>
<div class="t" style="left:311.5px;top:381.5px;font-size:12.8px;line-height:16.1px;color:#6E6E6E;transform:scaleX(.968);transform-origin:0 0">The quick brown fox<br>jumps over the lazy dog</div>
<div class="a" style="left:301.2px;top:432.7px;width:3.5px;height:3.5px;border-radius:50%;background:#808080"></div>
<div class="t" style="left:311.5px;top:426.5px;font-size:12.8px;line-height:16.1px;color:#6E6E6E;transform:scaleX(.968);transform-origin:0 0">The quick brown fox<br>jumps over the lazy dog</div>
<div class="a" style="left:301.2px;top:478.7px;width:3.5px;height:3.5px;border-radius:50%;background:#808080"></div>
<div class="t" style="left:311.5px;top:472.5px;font-size:12.8px;line-height:16.1px;color:#6E6E6E;transform:scaleX(.968);transform-origin:0 0">The quick brown fox<br>jumps over the lazy dog</div>
<div class="a" style="left:287px;top:519px;width:95px;height:87px;background:#E12D51;border-radius:0 45px 45px 0/0 43.5px 43.5px 0"></div>
<svg width="1073" height="690" style="left:0;top:0"><rect x="310.3" y="536" width="10" height="37.5" rx="1.5" fill="#fff"/><rect x="324.4" y="547.6" width="10" height="25.899999999999977" rx="1.5" fill="#fff"/><rect x="338.6" y="559.2" width="10" height="14.299999999999955" rx="1.5" fill="#fff"/><rect x="302.8" y="576.1" width="53.39999999999998" height="5" rx="2.5" fill="#fff"/></svg>
<div class="t" style="left:249.5px;top:496.9px;font-size:23px;color:#989898;transform:rotate(-90deg) scaleX(0.921);transform-origin:0 0">TRIMESTER</div>
<div class="t" style="left:249.5px;top:528.5px;font-size:23px;color:#989898;transform:rotate(-90deg);transform-origin:0 0">1</div>
<div class="t" style="left:247.3px;top:515px;font-size:16px;color:#989898;transform:rotate(-90deg);transform-origin:0 0">st</div>
<div class="a" style="left:565px;top:283px;width:198px;height:360px;background:#fff;box-shadow:1px 2px 5px rgba(0,0,0,.07);-webkit-mask-image:linear-gradient(180deg,rgba(0,0,0,.0) 0,#000 6px)"></div>
<div class="a" style="left:565px;top:283px;width:198px;height:360px;background:#fff"></div>
<div class="a" style="left:751px;top:283px;width:12px;height:345px;background:linear-gradient(90deg,rgba(0,0,0,0),rgba(0,0,0,.035));-webkit-mask-image:linear-gradient(180deg,transparent 0,#000 15%)"></div>
<div class="a" style="left:565px;top:283px;width:50px;height:360px;background:linear-gradient(90deg,rgba(0,0,0,.2),rgba(0,0,0,.07) 40%,rgba(0,0,0,0));-webkit-mask-image:linear-gradient(180deg,rgba(0,0,0,.25) 0,#000 18%,#000 100%)"></div>
<svg width="1073" height="690" style="left:0;top:0" fill="none"><path d="M565 299.5H759" stroke="#44546A" stroke-width="1.3"/><path d="M757 296.5l5 3l-5 3z" fill="#44546A"/><path d="M569.4 297v5.5 M588.4 297v5.5 M607.4 297v5.5 M626.3 297v5.5 M645.3 297v5.5 M664.3 297v5.5 M683.3 297v5.5 M702.3 297v5.5 M721.2 297v5.5 M740.2 297v5.5" stroke="#44546A" stroke-width="1.1"/></svg>
<div class="t" style="left:554.4px;width:30px;text-align:center;top:287.5px;font-size:7.5px;color:#8A8A8A">10</div>
<div class="t" style="left:573.4px;width:30px;text-align:center;top:287.5px;font-size:7.5px;color:#8A8A8A">20</div>
<div class="t" style="left:592.4px;width:30px;text-align:center;top:287.5px;font-size:7.5px;color:#8A8A8A">30</div>
<div class="t" style="left:611.3px;width:30px;text-align:center;top:287.5px;font-size:7.5px;color:#8A8A8A">40</div>
<div class="t" style="left:630.3px;width:30px;text-align:center;top:287.5px;font-size:7.5px;color:#8A8A8A">50</div>
<div class="t" style="left:649.3px;width:30px;text-align:center;top:287.5px;font-size:7.5px;color:#8A8A8A">60</div>
<div class="t" style="left:668.3px;width:30px;text-align:center;top:287.5px;font-size:7.5px;color:#8A8A8A">70</div>
<div class="t" style="left:687.3px;width:30px;text-align:center;top:287.5px;font-size:7.5px;color:#8A8A8A">80</div>
<div class="t" style="left:706.2px;width:30px;text-align:center;top:287.5px;font-size:7.5px;color:#8A8A8A">90</div>
<div class="t" style="left:725.2px;width:30px;text-align:center;top:287.5px;font-size:7.5px;color:#8A8A8A">100</div>
<div class="a" style="left:565px;top:314px;width:118px;height:22px;background:#6CAFBB"></div>
<div class="t" style="left:593.7px;width:60px;text-align:center;top:319.6px;font-size:12px;color:#fff;-webkit-text-stroke:.35px #fff">70%</div>
<div class="t" style="left:573.5px;top:350.9px;font-size:18.8px;color:#6CAFBB;transform:scaleX(0.822);transform-origin:0 0">OBJECTIVES</div>
<div class="a" style="left:579.2px;top:387.7px;width:3.5px;height:3.5px;border-radius:50%;background:#808080"></div>
<div class="t" style="left:589px;top:381.5px;font-size:12.8px;line-height:16.1px;color:#6E6E6E;transform:scaleX(.968);transform-origin:0 0">The quick brown fox jumps<br>over the lazy dog</div>
<div class="a" style="left:579.2px;top:432.7px;width:3.5px;height:3.5px;border-radius:50%;background:#808080"></div>
<div class="t" style="left:589px;top:426.5px;font-size:12.8px;line-height:16.1px;color:#6E6E6E;transform:scaleX(.968);transform-origin:0 0">The quick brown fox jumps<br>over the lazy dog</div>
<div class="a" style="left:579.2px;top:478.7px;width:3.5px;height:3.5px;border-radius:50%;background:#808080"></div>
<div class="t" style="left:589px;top:472.5px;font-size:12.8px;line-height:16.1px;color:#6E6E6E;transform:scaleX(.968);transform-origin:0 0">The quick brown fox jumps<br>over the lazy dog</div>
<div class="a" style="left:565px;top:519px;width:95px;height:87px;background:#6CAFBB;border-radius:0 45px 45px 0/0 43.5px 43.5px 0"></div>
<svg width="1073" height="690" style="left:0;top:0"><rect x="588.9" y="561.4" width="10" height="14.200000000000045" rx="1.5" fill="#fff"/><rect x="602.6" y="540" width="10" height="35.60000000000002" rx="1.5" fill="#fff"/><rect x="616" y="549.3" width="10" height="26.300000000000068" rx="1.5" fill="#fff"/><rect x="582" y="578.2" width="51" height="5" rx="2.5" fill="#fff"/></svg>
<div class="t" style="left:527.5px;top:484.5px;font-size:23px;color:#989898;transform:rotate(-90deg) scaleX(0.926);transform-origin:0 0">TRIMESTER</div>
<div class="t" style="left:527.5px;top:528.5px;font-size:23px;color:#989898;transform:rotate(-90deg);transform-origin:0 0">2</div>
<div class="t" style="left:525.3px;top:515px;font-size:16px;color:#989898;transform:rotate(-90deg);transform-origin:0 0">nd</div>
<div class="a" style="left:842px;top:283px;width:198px;height:360px;background:#fff;box-shadow:1px 2px 5px rgba(0,0,0,.07);-webkit-mask-image:linear-gradient(180deg,rgba(0,0,0,.0) 0,#000 6px)"></div>
<div class="a" style="left:842px;top:283px;width:198px;height:360px;background:#fff"></div>
<div class="a" style="left:842px;top:283px;width:50px;height:360px;background:linear-gradient(90deg,rgba(0,0,0,.2),rgba(0,0,0,.07) 40%,rgba(0,0,0,0));-webkit-mask-image:linear-gradient(180deg,rgba(0,0,0,.25) 0,#000 18%,#000 100%)"></div>
<svg width="1073" height="690" style="left:0;top:0" fill="none"><path d="M842 299.5H1036" stroke="#44546A" stroke-width="1.3"/><path d="M1034 296.5l5 3l-5 3z" fill="#44546A"/><path d="M846.4 297v5.5 M865.4 297v5.5 M884.4 297v5.5 M903.3 297v5.5 M922.3 297v5.5 M941.3 297v5.5 M960.3 297v5.5 M979.3 297v5.5 M998.2 297v5.5 M1017.2 297v5.5" stroke="#44546A" stroke-width="1.1"/></svg>
<div class="t" style="left:831.4px;width:30px;text-align:center;top:287.5px;font-size:7.5px;color:#8A8A8A">10</div>
<div class="t" style="left:850.4px;width:30px;text-align:center;top:287.5px;font-size:7.5px;color:#8A8A8A">20</div>
<div class="t" style="left:869.4px;width:30px;text-align:center;top:287.5px;font-size:7.5px;color:#8A8A8A">30</div>
<div class="t" style="left:888.3px;width:30px;text-align:center;top:287.5px;font-size:7.5px;color:#8A8A8A">40</div>
<div class="t" style="left:907.3px;width:30px;text-align:center;top:287.5px;font-size:7.5px;color:#8A8A8A">50</div>
<div class="t" style="left:926.3px;width:30px;text-align:center;top:287.5px;font-size:7.5px;color:#8A8A8A">60</div>
<div class="t" style="left:945.3px;width:30px;text-align:center;top:287.5px;font-size:7.5px;color:#8A8A8A">70</div>
<div class="t" style="left:964.3px;width:30px;text-align:center;top:287.5px;font-size:7.5px;color:#8A8A8A">80</div>
<div class="t" style="left:983.2px;width:30px;text-align:center;top:287.5px;font-size:7.5px;color:#8A8A8A">90</div>
<div class="t" style="left:1002.2px;width:30px;text-align:center;top:287.5px;font-size:7.5px;color:#8A8A8A">100</div>
<div class="a" style="left:842px;top:314px;width:175px;height:22px;background:#0F5186"></div>
<div class="t" style="left:900px;width:60px;text-align:center;top:319.6px;font-size:12px;color:#fff;-webkit-text-stroke:.35px #fff">100%</div>
<div class="t" style="left:850.7px;top:350.9px;font-size:18.8px;color:#1F5C92;transform:scaleX(0.886);transform-origin:0 0">ACCOMPLISHMENTS</div>
<div class="a" style="left:855.6px;top:387.7px;width:3.5px;height:3.5px;border-radius:50%;background:#808080"></div>
<div class="t" style="left:866.2px;top:381.5px;font-size:12.8px;line-height:16.1px;color:#6E6E6E;transform:scaleX(.968);transform-origin:0 0">The quick brown fox<br>jumps over the lazy dog</div>
<div class="a" style="left:855.6px;top:432.7px;width:3.5px;height:3.5px;border-radius:50%;background:#808080"></div>
<div class="t" style="left:866.2px;top:426.5px;font-size:12.8px;line-height:16.1px;color:#6E6E6E;transform:scaleX(.968);transform-origin:0 0">The quick brown fox<br>jumps over the lazy dog</div>
<div class="a" style="left:855.6px;top:478.7px;width:3.5px;height:3.5px;border-radius:50%;background:#808080"></div>
<div class="t" style="left:866.2px;top:472.5px;font-size:12.8px;line-height:16.1px;color:#6E6E6E;transform:scaleX(.968);transform-origin:0 0">The quick brown fox<br>jumps over the lazy dog</div>
<div class="a" style="left:842px;top:519px;width:96px;height:87px;background:#0F5186;border-radius:0 45px 45px 0/0 43.5px 43.5px 0"></div>
<svg width="1073" height="690" style="left:0;top:0"><rect x="860.1" y="561.7" width="10" height="13.899999999999977" rx="1.5" fill="#fff"/><rect x="874" y="550.3" width="10" height="25.300000000000068" rx="1.5" fill="#fff"/><rect x="888" y="538.9" width="10" height="36.700000000000045" rx="1.5" fill="#fff"/><rect x="853" y="578.2" width="52" height="5" rx="2.5" fill="#fff"/></svg>
<div class="t" style="left:804.5px;top:488.3px;font-size:23px;color:#989898;transform:rotate(-90deg) scaleX(0.924);transform-origin:0 0">TRIMESTER</div>
<div class="t" style="left:804.5px;top:528.5px;font-size:23px;color:#989898;transform:rotate(-90deg);transform-origin:0 0">3</div>
<div class="t" style="left:802.3px;top:515.5px;font-size:16px;color:#989898;transform:rotate(-90deg);transform-origin:0 0">rd</div>
</div></div>
</div>
</div></div>
<!--THUMBS_END-->
<!-- LEFT PANE -->
<div class="a" style="left:151px;top:164px;width:15px;height:501px;background:#DADADA"></div>
<div class="a sbtn" style="left:151px;top:164px;width:15px;height:15px"></div>
<div class="a sbtn" style="left:151px;top:245px;width:15px;height:150px"></div>
<div class="a sbtn" style="left:151px;top:650px;width:15px;height:15px"></div>
<div class="a" style="left:170px;top:163px;width:1px;height:502px;background:#C6C6C6"></div>
<!-- main right scrollbar -->
<div class="a" style="left:1056px;top:164px;width:15px;height:444px;background:#DADADA"></div>
<div class="a sbtn" style="left:1056px;top:164px;width:15px;height:15px"></div>
<div class="a sbtn" style="left:1056px;top:311px;width:15px;height:18px"></div>
<div class="a sbtn" style="left:1056px;top:593px;width:15px;height:15px"></div>
<!-- horizontal scrollbar -->
<div class="a sbtn" style="left:175px;top:645px;width:878px;height:15px"></div>
<div class="a" style="left:189px;top:646px;width:1px;height:13px;background:#ABABAB"></div>
<div class="a" style="left:1038px;top:646px;width:1px;height:13px;background:#ABABAB"></div>
<div class="a" style="left:173px;top:664px;width:900px;height:1px;background:#C6C6C6"></div>
<svg width="1073" height="690" style="left:0;top:0">
 <path d="M154.5 174.5h9l-4.5-4.5z M154.5 654.5h9l-4.5 4.5z M1059.5 174.5h9l-4.5-4.5z M1059.5 597.5h9l-4.5 4.5z M184.5 648.5v9l-4.5-4.5z M1044 648.5v9l4.5-4.5z" fill="#666"/>
 <path d="M1059.5 619.5h9l-4.5-4.5z M1059.5 624h9l-4.5-4.5z M1059.5 630h9l-4.5 4.5z M1059.5 634.5h9l-4.5 4.5z" fill="#666"/>
</svg>
<!-- slide shadow -->
<div class="a" style="left:182px;top:270px;width:51px;height:350px;background:linear-gradient(90deg,rgba(0,0,0,0) 0,rgba(0,0,0,.05) 50%,rgba(0,0,0,.22) 100%);-webkit-mask-image:linear-gradient(180deg,transparent 0,#000 22%,#000 80%,transparent 100%)"></div>
<!-- SLIDE -->
<div class="a" style="left:232px;top:169px;width:816px;height:460px;border:1px solid #B4B4B4;background:#fff"></div>

<!--SLIDE_START-->
<div class="a" style="left:233px;top:170px;width:814px;height:458px;overflow:hidden">
<div class="a" style="left:-233px;top:-170px;width:1073px;height:690px">
<div class="t" style="left:532px;top:191.3px;font-size:29.6px;color:#808080;transform:scaleX(.862);transform-origin:0 0">YEARLY REPORT</div>
<div class="a" style="left:592px;top:227px;width:91px;height:5px;background:#17508A"></div>
<div class="t" style="left:516.5px;top:241.5px;font-size:12.5px;color:#707070;transform:scaleX(.987);transform-origin:0 0">The quick brown fox jumps over the lazy dog</div>
<div class="a" style="left:287px;top:283px;width:198px;height:360px;background:#fff;box-shadow:1px 2px 5px rgba(0,0,0,.07);-webkit-mask-image:linear-gradient(180deg,rgba(0,0,0,.0) 0,#000 6px)"></div>
<div class="a" style="left:287px;top:283px;width:198px;height:360px;background:#fff"></div>
<div class="a" style="left:473px;top:283px;width:12px;height:345px;background:linear-gradient(90deg,rgba(0,0,0,0),rgba(0,0,0,.035));-webkit-mask-image:linear-gradient(180deg,transparent 0,#000 15%)"></div>
<div class="a" style="left:287px;top:283px;width:50px;height:360px;background:linear-gradient(90deg,rgba(0,0,0,.2),rgba(0,0,0,.07) 40%,rgba(0,0,0,0));-webkit-mask-image:linear-gradient(180deg,rgba(0,0,0,.25) 0,#000 18%,#000 100%)"></div>
<svg width="1073" height="690" style="left:0;top:0" fill="none"><path d="M287 299.5H481" stroke="#44546A" stroke-width="1.3"/><path d="M479 296.5l5 3l-5 3z" fill="#44546A"/><path d="M291.4 297v5.5 M310.4 297v5.5 M329.4 297v5.5 M348.3 297v5.5 M367.3 297v5.5 M386.3 297v5.5 M405.3 297v5.5 M424.3 297v5.5 M443.2 297v5.5 M462.2 297v5.5" stroke="#44546A" stroke-width="1.1"/></svg>
<div class="t" style="left:276.4px;width:30px;text-align:center;top:287.5px;font-size:7.5px;color:#8A8A8A">10</div>
<div class="t" style="left:295.4px;width:30px;text-align:center;top:287.5px;font-size:7.5px;color:#8A8A8A">20</div>
<div class="t" style="left:314.4px;width:30px;text-align:center;top:287.5px;font-size:7.5px;color:#8A8A8A">30</div>
<div class="t" style="left:333.3px;width:30px;text-align:center;top:287.5px;font-size:7.5px;color:#8A8A8A">40</div>
<div class="t" style="left:352.3px;width:30px;text-align:center;top:287.5px;font-size:7.5px;color:#8A8A8A">50</div>
<div class="t" style="left:371.3px;width:30px;text-align:center;top:287.5px;font-size:7.5px;color:#8A8A8A">60</div>
<div class="t" style="left:390.3px;width:30px;text-align:center;top:287.5px;font-size:7.5px;color:#8A8A8A">70</div>
<div class="t" style="left:409.3px;width:30px;text-align:center;top:287.5px;font-size:7.5px;color:#8A8A8A">80</div>
<div class="t" style="left:428.2px;width:30px;text-align:center;top:287.5px;font-size:7.5px;color:#8A8A8A">90</div>
<div class="t" style="left:447.2px;width:30px;text-align:center;top:287.5px;font-size:7.5px;color:#8A8A8A">100</div>
<div class="a" style="left:287px;top:314px;width:80px;height:22px;background:#E12D51"></div>
<div class="t" style="left:296.6px;width:60px;text-align:center;top:319.6px;font-size:12px;color:#fff;-webkit-text-stroke:.35px #fff">40%</div>
<div class="t" style="left:295.6px;top:350.9px;font-size:18.8px;color:#F26E38;transform:scaleX(0.822);transform-origin:0 0">OBJECTIVES</div>
<div class="a" style="left:301.2px;top:387.7px;width:3.5px;height:3.5px;border-radius:50%;background:#808080"></div>
<div class="t" style="left:311.5px;top:381.5px;font-size:12.8px;line-height:16.1px;color:#6E6E6E;transform:scaleX(.968);transform-origin:0 0">The quick brown fox<br>jumps over the lazy dog</div>
<div class="a" style="left:301.2px;top:432.7px;width:3.5px;height:3.5px;border-radius:50%;background:#808080"></div>
<div class="t" style="left:311.5px;top:426.5px;font-size:12.8px;line-height:16.1px;color:#6E6E6E;transform:scaleX(.968);transform-origin:0 0">The quick brown fox<br>jumps over the lazy dog</div>
<div class="a" style="left:301.2px;top:478.7px;width:3.5px;height:3.5px;border-radius:50%;background:#808080"></div>
<div class="t" style="left:311.5px;top:472.5px;font-size:12.8px;line-height:16.1px;color:#6E6E6E;transform:scaleX(.968);transform-origin:0 0">The quick brown fox<br>jumps over the lazy dog</div>
<div class="a" style="left:287px;top:519px;width:95px;height:87px;background:#E12D51;border-radius:0 45px 45px 0/0 43.5px 43.5px 0"></div>
<svg width="1073" height="690" style="left:0;top:0"><rect x="310.3" y="536" width="10" height="37.5" rx="1.5" fill="#fff"/><rect x="324.4" y="547.6" width="10" height="25.899999999999977" rx="1.5" fill="#fff"/><rect x="338.6" y="559.2" width="10" height="14.299999999999955" rx="1.5" fill="#fff"/><rect x="302.8" y="576.1" width="53.39999999999998" height="5" rx="2.5" fill="#fff"/></svg>
<div class="t" style="left:249.5px;top:496.9px;font-size:23px;color:#989898;transform:rotate(-90deg) scaleX(0.921);transform-origin:0 0">TRIMESTER</div>
<div class="t" style="left:249.5px;top:528.5px;font-size:23px;color:#989898;transform:rotate(-90deg);transform-origin:0 0">1</div>
<div class="t" style="left:247.3px;top:515px;font-size:16px;color:#989898;transform:rotate(-90deg);transform-origin:0 0">st</div>
<div class="a" style="left:565px;top:283px;width:198px;height:360px;background:#fff;box-shadow:1px 2px 5px rgba(0,0,0,.07);-webkit-mask-image:linear-gradient(180deg,rgba(0,0,0,.0) 0,#000 6px)"></div>
<div class="a" style="left:565px;top:283px;width:198px;height:360px;background:#fff"></div>
<div class="a" style="left:751px;top:283px;width:12px;height:345px;background:linear-gradient(90deg,rgba(0,0,0,0),rgba(0,0,0,.035));-webkit-mask-image:linear-gradient(180deg,transparent 0,#000 15%)"></div>
<div class="a" style="left:565px;top:283px;width:50px;height:360px;background:linear-gradient(90deg,rgba(0,0,0,.2),rgba(0,0,0,.07) 40%,rgba(0,0,0,0));-webkit-mask-image:linear-gradient(180deg,rgba(0,0,0,.25) 0,#000 18%,#000 100%)"></div>
<svg width="1073" height="690" style="left:0;top:0" fill="none"><path d="M565 299.5H759" stroke="#44546A" stroke-width="1.3"/><path d="M757 296.5l5 3l-5 3z" fill="#44546A"/><path d="M569.4 297v5.5 M588.4 297v5.5 M607.4 297v5.5 M626.3 297v5.5 M645.3 297v5.5 M664.3 297v5.5 M683.3 297v5.5 M702.3 297v5.5 M721.2 297v5.5 M740.2 297v5.5" stroke="#44546A" stroke-width="1.1"/></svg>
<div class="t" style="left:554.4px;width:30px;text-align:center;top:287.5px;font-size:7.5px;color:#8A8A8A">10</div>
<div class="t" style="left:573.4px;width:30px;text-align:center;top:287.5px;font-size:7.5px;color:#8A8A8A">20</div>
<div class="t" style="left:592.4px;width:30px;text-align:center;top:287.5px;font-size:7.5px;color:#8A8A8A">30</div>
<div class="t" style="left:611.3px;width:30px;text-align:center;top:287.5px;font-size:7.5px;color:#8A8A8A">40</div>
<div class="t" style="left:630.3px;width:30px;text-align:center;top:287.5px;font-size:7.5px;color:#8A8A8A">50</div>
<div class="t" style="left:649.3px;width:30px;text-align:center;top:287.5px;font-size:7.5px;color:#8A8A8A">60</div>
<div class="t" style="left:668.3px;width:30px;text-align:center;top:287.5px;font-size:7.5px;color:#8A8A8A">70</div>
<div class="t" style="left:687.3px;width:30px;text-align:center;top:287.5px;font-size:7.5px;color:#8A8A8A">80</div>
<div class="t" style="left:706.2px;width:30px;text-align:center;top:287.5px;font-size:7.5px;color:#8A8A8A">90</div>
<div class="t" style="left:725.2px;width:30px;text-align:center;top:287.5px;font-size:7.5px;color:#8A8A8A">100</div>
<div class="a" style="left:565px;top:314px;width:118px;height:22px;background:#6CAFBB"></div>
<div class="t" style="left:593.7px;width:60px;text-align:center;top:319.6px;font-size:12px;color:#fff;-webkit-text-stroke:.35px #fff">70%</div>
<div class="t" style="left:573.5px;top:350.9px;font-size:18.8px;color:#6CAFBB;transform:scaleX(0.822);transform-origin:0 0">OBJECTIVES</div>
<div class="a" style="left:579.2px;top:387.7px;width:3.5px;height:3.5px;border-radius:50%;background:#808080"></div>
<div class="t" style="left:589px;top:381.5px;font-size:12.8px;line-height:16.1px;color:#6E6E6E;transform:scaleX(.968);transform-origin:0 0">The quick brown fox jumps<br>over the lazy dog</div>
<div class="a" style="left:579.2px;top:432.7px;width:3.5px;height:3.5px;border-radius:50%;background:#808080"></div>
<div class="t" style="left:589px;top:426.5px;font-size:12.8px;line-height:16.1px;color:#6E6E6E;transform:scaleX(.968);transform-origin:0 0">The quick brown fox jumps<br>over the lazy dog</div>
<div class="a" style="left:579.2px;top:478.7px;width:3.5px;height:3.5px;border-radius:50%;background:#808080"></div>
<div class="t" style="left:589px;top:472.5px;font-size:12.8px;line-height:16.1px;color:#6E6E6E;transform:scaleX(.968);transform-origin:0 0">The quick brown fox jumps<br>over the lazy dog</div>
<div class="a" style="left:565px;top:519px;width:95px;height:87px;background:#6CAFBB;border-radius:0 45px 45px 0/0 43.5px 43.5px 0"></div>
<svg width="1073" height="690" style="left:0;top:0"><rect x="588.9" y="561.4" width="10" height="14.200000000000045" rx="1.5" fill="#fff"/><rect x="602.6" y="540" width="10" height="35.60000000000002" rx="1.5" fill="#fff"/><rect x="616" y="549.3" width="10" height="26.300000000000068" rx="1.5" fill="#fff"/><rect x="582" y="578.2" width="51" height="5" rx="2.5" fill="#fff"/></svg>
<div class="t" style="left:527.5px;top:484.5px;font-size:23px;color:#989898;transform:rotate(-90deg) scaleX(0.926);transform-origin:0 0">TRIMESTER</div>
<div class="t" style="left:527.5px;top:528.5px;font-size:23px;color:#989898;transform:rotate(-90deg);transform-origin:0 0">2</div>
<div class="t" style="left:525.3px;top:515px;font-size:16px;color:#989898;transform:rotate(-90deg);transform-origin:0 0">nd</div>
<div class="a" style="left:842px;top:283px;width:198px;height:360px;background:#fff;box-shadow:1px 2px 5px rgba(0,0,0,.07);-webkit-mask-image:linear-gradient(180deg,rgba(0,0,0,.0) 0,#000 6px)"></div>
<div class="a" style="left:842px;top:283px;width:198px;height:360px;background:#fff"></div>
<div class="a" style="left:842px;top:283px;width:50px;height:360px;background:linear-gradient(90deg,rgba(0,0,0,.2),rgba(0,0,0,.07) 40%,rgba(0,0,0,0));-webkit-mask-image:linear-gradient(180deg,rgba(0,0,0,.25) 0,#000 18%,#000 100%)"></div>
<svg width="1073" height="690" style="left:0;top:0" fill="none"><path d="M842 299.5H1036" stroke="#44546A" stroke-width="1.3"/><path d="M1034 296.5l5 3l-5 3z" fill="#44546A"/><path d="M846.4 297v5.5 M865.4 297v5.5 M884.4 297v5.5 M903.3 297v5.5 M922.3 297v5.5 M941.3 297v5.5 M960.3 297v5.5 M979.3 297v5.5 M998.2 297v5.5 M1017.2 297v5.5" stroke="#44546A" stroke-width="1.1"/></svg>
<div class="t" style="left:831.4px;width:30px;text-align:center;top:287.5px;font-size:7.5px;color:#8A8A8A">10</div>
<div class="t" style="left:850.4px;width:30px;text-align:center;top:287.5px;font-size:7.5px;color:#8A8A8A">20</div>
<div class="t" style="left:869.4px;width:30px;text-align:center;top:287.5px;font-size:7.5px;color:#8A8A8A">30</div>
<div class="t" style="left:888.3px;width:30px;text-align:center;top:287.5px;font-size:7.5px;color:#8A8A8A">40</div>
<div class="t" style="left:907.3px;width:30px;text-align:center;top:287.5px;font-size:7.5px;color:#8A8A8A">50</div>
<div class="t" style="left:926.3px;width:30px;text-align:center;top:287.5px;font-size:7.5px;color:#8A8A8A">60</div>
<div class="t" style="left:945.3px;width:30px;text-align:center;top:287.5px;font-size:7.5px;color:#8A8A8A">70</div>
<div class="t" style="left:964.3px;width:30px;text-align:center;top:287.5px;font-size:7.5px;color:#8A8A8A">80</div>
<div class="t" style="left:983.2px;width:30px;text-align:center;top:287.5px;font-size:7.5px;color:#8A8A8A">90</div>
<div class="t" style="left:1002.2px;width:30px;text-align:center;top:287.5px;font-size:7.5px;color:#8A8A8A">100</div>
<div class="a" style="left:842px;top:314px;width:175px;height:22px;background:#0F5186"></div>
<div class="t" style="left:900px;width:60px;text-align:center;top:319.6px;font-size:12px;color:#fff;-webkit-text-stroke:.35px #fff">100%</div>
<div class="t" style="left:850.7px;top:350.9px;font-size:18.8px;color:#1F5C92;transform:scaleX(0.886);transform-origin:0 0">ACCOMPLISHMENTS</div>
<div class="a" style="left:855.6px;top:387.7px;width:3.5px;height:3.5px;border-radius:50%;background:#808080"></div>
<div class="t" style="left:866.2px;top:381.5px;font-size:12.8px;line-height:16.1px;color:#6E6E6E;transform:scaleX(.968);transform-origin:0 0">The quick brown fox<br>jumps over the lazy dog</div>
<div class="a" style="left:855.6px;top:432.7px;width:3.5px;height:3.5px;border-radius:50%;background:#808080"></div>
<div class="t" style="left:866.2px;top:426.5px;font-size:12.8px;line-height:16.1px;color:#6E6E6E;transform:scaleX(.968);transform-origin:0 0">The quick brown fox<br>jumps over the lazy dog</div>
<div class="a" style="left:855.6px;top:478.7px;width:3.5px;height:3.5px;border-radius:50%;background:#808080"></div>
<div class="t" style="left:866.2px;top:472.5px;font-size:12.8px;line-height:16.1px;color:#6E6E6E;transform:scaleX(.968);transform-origin:0 0">The quick brown fox<br>jumps over the lazy dog</div>
<div class="a" style="left:842px;top:519px;width:96px;height:87px;background:#0F5186;border-radius:0 45px 45px 0/0 43.5px 43.5px 0"></div>
<svg width="1073" height="690" style="left:0;top:0"><rect x="860.1" y="561.7" width="10" height="13.899999999999977" rx="1.5" fill="#fff"/><rect x="874" y="550.3" width="10" height="25.300000000000068" rx="1.5" fill="#fff"/><rect x="888" y="538.9" width="10" height="36.700000000000045" rx="1.5" fill="#fff"/><rect x="853" y="578.2" width="52" height="5" rx="2.5" fill="#fff"/></svg>
<div class="t" style="left:804.5px;top:488.3px;font-size:23px;color:#989898;transform:rotate(-90deg) scaleX(0.924);transform-origin:0 0">TRIMESTER</div>
<div class="t" style="left:804.5px;top:528.5px;font-size:23px;color:#989898;transform:rotate(-90deg);transform-origin:0 0">3</div>
<div class="t" style="left:802.3px;top:515.5px;font-size:16px;color:#989898;transform:rotate(-90deg);transform-origin:0 0">rd</div>
</div></div>
<!--SLIDE_END-->
<!--BODY_END-->
<!-- STATUS -->
<div id="status" class="a"></div>
<!--STATUS_START-->
<div class="t" style="left:9px;top:672px;font-size:12px;color:#444;transform:scaleX(.93);transform-origin:0 0">Slide 8 of 21</div>
<div class="t" style="left:122px;top:672px;font-size:12px;color:#444;transform:scaleX(.94);transform-origin:0 0">English (United States)</div>
<div class="t" style="left:654.5px;top:672px;font-size:12px;color:#444;transform:scaleX(.92);transform-origin:0 0">Notes</div>
<div class="t" style="left:1008.5px;top:672.5px;font-size:12px;color:#444;transform:scaleX(.87);transform-origin:0 0">64%</div>
<div class="a" style="left:703px;top:668px;width:40px;height:21px;background:#C8C6C4"></div>
<svg width="1073" height="690" style="left:0;top:0" fill="none" stroke="#444" stroke-width="1">
 <!-- accessibility book -->
 <path d="M91.5 672.5v10c2-.8 4-.8 6 1c2-1.8 4-1.8 6-1v-10c-2-.8-4-.8-6 1c-2-1.8-4-1.8-6-1z M97.5 673.5v9"/>
 <path d="M99 681l2 2l3.5-4" stroke="#444"/>
 <!-- notes -->
 <path d="M637 675.5h14 M637 678.5h14 M637 681.5h14 M637 684.5h9 M641.5 673l2.5-2l2.5 2"/>
 <!-- normal -->
 <path d="M716.5 672.5h13v11h-13z M718.5 672.5v11 M720.5 674.5h7v5h-7z M718.5 681.5h11"/>
 <!-- sorter -->
 <path d="M756.5 672.5h5v4h-5z M764.5 672.5h5v4h-5z M756.5 679.5h5v4h-5z M764.5 679.5h5v4h-5z"/>
 <!-- reading -->
 <path d="M796.5 673.5c2-.7 4-.7 6 .7c2-1.4 4-1.4 6-.7v10.5c-2-.7-4-.7-6 .7c-2-1.4-4-1.4-6-.7z M802.5 674v10.5 M798.5 676h2 M798.5 678.5h2 M798.5 681h2 M804.5 676h2 M804.5 678.5h2 M804.5 681h2"/>
 <!-- slideshow -->
 <path d="M836.5 672.5h12 M837.5 672.5v7h10v-7 M842.5 679.5v4 M839.5 684h6 M840.5 674.5v3l2.5-1.5z"/>
 <!-- zoom -->
 <path d="M869 677.5h8 M987 677.5h8 M991 673.5v8.5"/>
 <path d="M882 677.8h99.5 M932.5 674.5v6" stroke="#A6A6A6"/>
 <!-- fit -->
 <path d="M1045.5 674.5h5.5v6h-5.5z M1044 675l-2.5 2.5l2.5 2.5 M1052.5 675l2.5 2.5l-2.5 2.5 M1045.8 672.3l2.5-2.2l2.5 2.2 M1045.8 682.7l2.5 2.2l2.5-2.2"/>
</svg>
<div class="a" style="left:911px;top:672px;width:5px;height:11px;background:#666"></div>

<!--STATUS_END-->

<!-- window border -->
<div class="a" style="left:0;top:0;width:1px;height:690px;background:#B7472A"></div>
<div class="a" style="left:1072px;top:0;width:1px;height:690px;background:#B7472A"></div>
<div class="a" style="left:0;top:689px;width:1073px;height:1px;background:#B7472A"></div>
</body></html>
